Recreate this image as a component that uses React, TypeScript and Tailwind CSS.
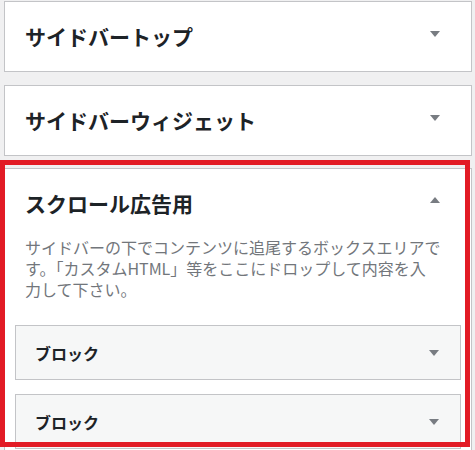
import React from "react";

const Down = ({ className = "" }: { className?: string }) => (
  <svg width="10" height="6" viewBox="0 0 10 6" className={className}>
    <polygon points="0,0 10,0 5,6" fill="#787c82" />
  </svg>
);
const Up = ({ className = "" }: { className?: string }) => (
  <svg width="10" height="6" viewBox="0 0 10 6" className={className}>
    <polygon points="0,6 10,6 5,0" fill="#787c82" />
  </svg>
);

const Panel = ({ title }: { title: string }) => (
  <div className="h-[71px] shrink-0 border border-[#c3c4c7] bg-white flex items-center justify-between pl-[20px] pr-[31px]">
    <h2 className="text-[21px] font-bold text-[#1d2327] leading-none">{title}</h2>
    <Down className="mb-[6px]" />
  </div>
);

const Block = () => (
  <div className="h-[55px] shrink-0 border border-[#c3c4c7] bg-[#f6f7f7] flex items-center justify-between pl-[19px] pr-[21px]">
    <h3 className="text-[16px] font-bold text-[#1d2327] leading-none">ブロック</h3>
    <Down />
  </div>
);

export default function App() {
  return (
    <div
      className="relative w-[475px] h-[450px] overflow-hidden bg-[#f0f0f1] pt-[1px] pl-[4px] pr-[3px] flex flex-col"
      style={{ fontFamily: '"Noto Sans CJK JP", "Noto Sans", sans-serif' }}
    >
      <Panel title="サイドバートップ" />
      <div className="mt-[13px]">
        <Panel title="サイドバーウィジェット" />
      </div>
      <div className="mt-[12px] shrink-0 border border-[#c3c4c7] bg-white pb-[10px]">
        <div className="h-[68px] flex items-center justify-between pl-[20px] pr-[31px]">
          <h2 className="text-[21px] font-bold text-[#1d2327] leading-none">スクロール広告用</h2>
          <Up className="mb-[6px]" />
        </div>
        <p className="px-[20px] text-[16px] leading-[21px] text-[#72767b] whitespace-nowrap">
          サイドバーの下でコンテンツに追尾するボックスエリアで
          <br />
          す。「カスタムHTML」等をここにドロップして内容を入
          <br />
          力して下さい。
        </p>
        <div className="mt-[25px] mx-[10px] flex flex-col gap-[14px]">
          <Block />
          <Block />
        </div>
      </div>
      <div className="absolute left-0 top-[160px] w-[470px] h-[287px] border-[5px] border-[#e21b25] pointer-events-none" />
    </div>
  );
}
